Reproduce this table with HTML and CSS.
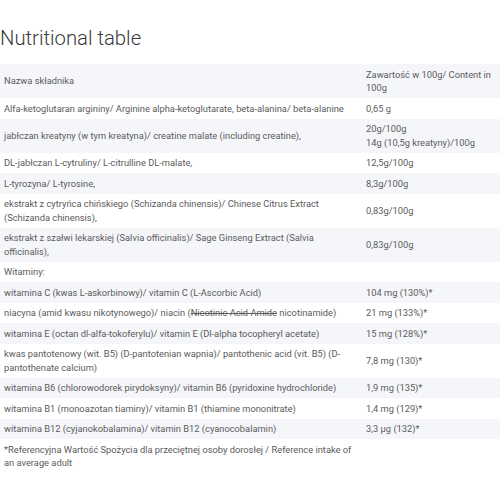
FILE: index.html
```html
<!DOCTYPE html>
<html lang="pl">
<head>
<meta charset="utf-8">
<title>Nutritional table</title>
<link rel="stylesheet" href="styles.css">
</head>
<body>
<h2 class="title">Nutritional table</h2>
<table class="nutri">
  <colgroup><col class="c1"><col class="c2"></colgroup>
  <tbody>
    <tr><td>Nazwa składnika</td><td>Zawartość w 100g/ Content in 100g</td></tr>
    <tr><td>Alfa-ketoglutaran argininy/ Arginine alpha-ketoglutarate, beta-alanina/ beta-alanine</td><td>0,65 g</td></tr>
    <tr><td>jabłczan kreatyny (w tym kreatyna)/ creatine malate (including creatine),</td><td>20g/100g<br>14g (10,5g kreatyny)/100g</td></tr>
    <tr><td>DL-jabłczan L-cytruliny/ L-citrulline DL-malate,</td><td>12,5g/100g</td></tr>
    <tr><td>L-tyrozyna/ L-tyrosine,</td><td>8,3g/100g</td></tr>
    <tr><td>ekstrakt z cytryńca chińskiego (Schizanda chinensis)/ Chinese Citrus Extract (Schizanda chinensis),</td><td>0,83g/100g</td></tr>
    <tr><td>ekstrakt z szałwi lekarskiej (Salvia officinalis)/ Sage Ginseng Extract (Salvia officinalis),</td><td>0,83g/100g</td></tr>
    <tr><td>Witaminy:</td><td></td></tr>
    <tr><td>witamina C (kwas L-askorbinowy)/ vitamin C (L-Ascorbic Acid)</td><td>104 mg (130%)*</td></tr>
    <tr><td>niacyna (amid kwasu nikotynowego)/ niacin (<s>Nicotinic Acid Amide</s> nicotinamide)</td><td>21 mg (133%)*</td></tr>
    <tr><td>witamina E (octan dl-alfa-tokoferylu)/ vitamin E (Dl-alpha tocopheryl acetate)</td><td>15 mg (128%)*</td></tr>
    <tr><td>kwas pantotenowy (wit. B5) (D-pantotenian wapnia)/ pantothenic acid (vit. B5) (D-pantothenate calcium)</td><td>7,8 mg (130)*</td></tr>
    <tr><td>witamina B6 (chlorowodorek pirydoksyny)/ vitamin B6 (pyridoxine hydrochloride)</td><td>1,9 mg (135)*</td></tr>
    <tr><td>witamina B1 (monoazotan tiaminy)/ vitamin B1 (thiamine mononitrate)</td><td>1,4 mg (129)*</td></tr>
    <tr><td>witamina B12 (cyjanokobalamina)/ vitamin B12 (cyanocobalamin)</td><td>3,3 µg (132)*</td></tr>
    <tr><td>*Referencyjna Wartość Spożycia dla przeciętnej osoby dorosłej / Reference intake of an average adult</td><td></td></tr>
  </tbody>
</table>
</body>
</html>
```

FILE: styles.css
```css
html, body {
  margin: 0;
  padding: 0;
  background: #ffffff;
}
body {
  font-family: Roboto, "Liberation Sans", sans-serif;
  color: #5b5b5b;
}
.title {
  margin: 0;
  padding: 25px 0 0 0;
  height: 39px;
  font-size: 20.3px;
  line-height: 26px;
  font-weight: 300;
  color: #3a3a3a;
}
.nutri {
  width: 500px;
  border-collapse: collapse;
  table-layout: fixed;
  font-size: 9.3px;
  line-height: 13.5px;
}
.nutri .c1 { width: 362px; }
.nutri .c2 { width: 138px; }
.nutri td {
  padding: 3.5px 4px;
  vertical-align: middle;
  text-align: left;
}
.nutri tr:nth-child(odd) td {
  background: #f5f6f9;
}
.nutri s {
  text-decoration: line-through;
}
```
